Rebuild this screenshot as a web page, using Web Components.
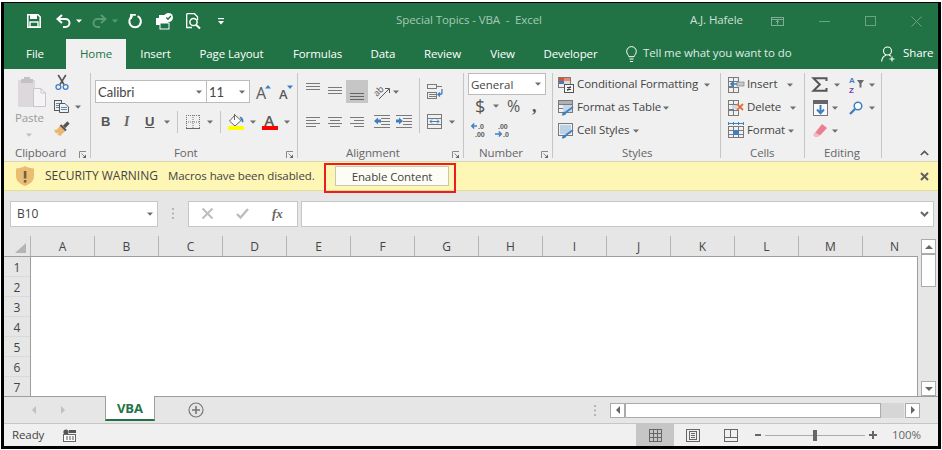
<!DOCTYPE html>
<html lang="en"><head><meta charset="utf-8"><title>Special Topics - VBA - Excel</title>
<style>html,body{margin:0;padding:0;background:#fff;overflow:hidden}</style></head>
<body>
<xl-app>
  <xl-titlebar></xl-titlebar>
  <xl-tabs></xl-tabs>
  <xl-ribbon>
    <xl-group w="87" label="Clipboard" lx="11" launcher>
      <xl-hbox>
        <xl-col w="50">
          <xl-ic name="paste" m="14" t="4"></xl-ic>
          <xl-t m="11" t="3" w="31" c="#9a9a9a" nb>Paste</xl-t>
          <xl-ic name="caretl" m="22" t="7"></xl-ic>
        </xl-col>
        <xl-col w="30">
          <xl-row h="17" t="1"><xl-ic name="cut" m="1"></xl-ic></xl-row>
          <xl-row h="17" t="7"><xl-ic name="copy"></xl-ic><xl-ic name="caret" m="6"></xl-ic></xl-row>
          <xl-row h="17" t="5"><xl-ic name="painter"></xl-ic></xl-row>
        </xl-col>
      </xl-hbox>
    </xl-group>
    <xl-group w="207" label="Font" lx="83" launcher>
      <xl-row h="23" t="7">
        <xl-combo m="4" w="112" h="23" f="Lato" text="Calibri"></xl-combo>
        <xl-combo m="-1" w="44" h="23" f="Lato" text="11"></xl-combo>
        <xl-ic name="grow" m="6"></xl-ic><xl-ic name="shrink" m="8"></xl-ic>
      </xl-row>
      <xl-row h="23" t="7">
        <xl-t m="10" w="8" s="13" wt="700" f="Liberation Sans" c="#555">B</xl-t>
        <xl-t m="15" w="6" s="14" wt="700" f="Liberation Serif" c="#666" it>I</xl-t>
        <xl-t m="15" w="8" s="13" wt="700" f="Liberation Sans" c="#555" u>U</xl-t>
        <xl-ic name="caret" m="11"></xl-ic><xl-sep m="7" h="22"></xl-sep>
        <xl-ic name="borders" m="8"></xl-ic><xl-ic name="caret" m="7"></xl-ic><xl-sep m="7" h="22"></xl-sep>
        <xl-ic name="fill" m="7"></xl-ic><xl-ic name="caret" m="6"></xl-ic>
        <xl-ic name="color" m="6"></xl-ic><xl-ic name="caret" m="6"></xl-ic>
      </xl-row>
    </xl-group>
    <xl-group w="166" label="Alignment" lx="48" launcher>
      <xl-hbox>
        <xl-col w="121">
          <xl-row h="23" t="7">
            <xl-ic name="atop" m="8"></xl-ic><xl-ic name="amid" m="8"></xl-ic><xl-ic name="abot" m="4"></xl-ic>
            <xl-ic name="orient" m="6"></xl-ic><xl-ic name="caret" m="3"></xl-ic>
          </xl-row>
          <xl-row h="23" t="7">
            <xl-ic name="left" m="8"></xl-ic><xl-ic name="center" m="8"></xl-ic><xl-ic name="right" m="8"></xl-ic>
            <xl-ic name="outdent" m="10"></xl-ic><xl-ic name="indent" m="6"></xl-ic>
          </xl-row>
        </xl-col>
        <xl-sep h="55" t="5"></xl-sep>
        <xl-col w="40">
          <xl-row h="23" t="7"><xl-ic name="wrap" m="7"></xl-ic></xl-row>
          <xl-row h="23" t="7"><xl-ic name="merge" m="7"></xl-ic><xl-ic name="caret" m="6"></xl-ic></xl-row>
        </xl-col>
      </xl-hbox>
    </xl-group>
    <xl-group w="89" label="Number" lx="15" launcher>
      <xl-row h="22"><xl-combo m="4" w="78" h="22" f="Open Sans" s="11.5" text="General"></xl-combo></xl-row>
      <xl-row h="23" t="-1">
        <xl-t m="11" w="9" s="18" f="Open Sans" c="#555" ls="0">$</xl-t><xl-ic name="caret" m="9"></xl-ic>
        <xl-t m="8" w="14" s="16" f="Open Sans" c="#555" ls="0">%</xl-t>
        <xl-t m="11" w="5" s="18" wt="700" f="Liberation Serif" c="#555" ls="0">,</xl-t>
      </xl-row>
      <xl-row h="23" t="1"><xl-ic name="incdec" m="7"></xl-ic><xl-ic name="decdec" m="7"></xl-ic></xl-row>
    </xl-group>
    <xl-group w="168" label="Styles" lx="69">
      <xl-row h="23"><xl-ic name="cond" m="5"></xl-ic><xl-t m="3" w="124">Conditional Formatting</xl-t><xl-ic name="caret" m="3"></xl-ic></xl-row>
      <xl-row h="23"><xl-ic name="table" m="5"></xl-ic><xl-t m="3" w="84">Format as Table</xl-t><xl-ic name="caret" m="2"></xl-ic></xl-row>
      <xl-row h="23"><xl-ic name="cstyle" m="5"></xl-ic><xl-t m="3" w="54">Cell Styles</xl-t><xl-ic name="caret" m="2"></xl-ic></xl-row>
    </xl-group>
    <xl-group w="84" label="Cells" lx="29">
      <xl-row h="23"><xl-ic name="cinsert" m="7"></xl-ic><xl-t m="3" w="29">Insert</xl-t><xl-ic name="caret" m="11"></xl-ic></xl-row>
      <xl-row h="23"><xl-ic name="cdelete" m="7"></xl-ic><xl-t m="3" w="33">Delete</xl-t><xl-ic name="caret" m="10"></xl-ic></xl-row>
      <xl-row h="23"><xl-ic name="cformat" m="7"></xl-ic><xl-t m="3" w="38">Format</xl-t><xl-ic name="caret" m="3"></xl-ic></xl-row>
    </xl-group>
    <xl-group w="77" label="Editing" lx="19">
      <xl-row h="23"><xl-ic name="sigma" m="7"></xl-ic><xl-ic name="caret" m="7"></xl-ic><xl-ic name="sort" m="9"></xl-ic><xl-ic name="caret" m="4"></xl-ic></xl-row>
      <xl-row h="23"><xl-ic name="filld" m="8"></xl-ic><xl-ic name="caret" m="4"></xl-ic><xl-ic name="find" m="11"></xl-ic><xl-ic name="caret" m="6"></xl-ic></xl-row>
      <xl-row h="23"><xl-ic name="eraser" m="8"></xl-ic><xl-ic name="caret" m="5"></xl-ic></xl-row>
    </xl-group>
    <xl-ic name="collapse" m="38" t="77"></xl-ic>
  </xl-ribbon>
  <xl-security></xl-security>
  <xl-formula></xl-formula>
  <xl-sheet></xl-sheet>
  <xl-sheetbar></xl-sheetbar>
  <xl-status></xl-status>
</xl-app>
<script>
const G='#6f6f6f',D='#5a5a5a',B='#3f7fc1',W='#fff',L='#7a7a7a';
const hl=(x1,x2,y,c=L)=>`<rect x="${x1}" y="${y}" width="${x2-x1}" height="1" fill="${c}"/>`;
const vl=(x,y1,y2,c=L)=>`<rect x="${x}" y="${y1}" width="1" height="${y2-y1}" fill="${c}"/>`;
const tbox=(x,y,w,h,c=L,f='none')=>`<rect x="${x+.5}" y="${y+.5}" width="${w-1}" height="${h-1}" stroke="${c}" fill="${f}"/>`;
const tx=(s,x,y,sz,c,extra='')=>`<text x="${x}" y="${y}" font-family="Open Sans" font-size="${sz}" fill="${c}" ${extra}>${s}</text>`;
const ts=(s,x,y,sz,c)=>`<text x="${x}" y="${y}" font-family="Liberation Sans" font-weight="700" font-size="${sz}" fill="${c}">${s}</text>`;
const ICONS={
 caret:[6,4,`<path d="M0 .5H6L3 3.8Z" fill="${G}"/>`],
 caretl:[6,4,`<path d="M0 .5H6L3 3.8Z" fill="#bdbdbd"/>`],
 save:[14,14,`<path d="M.8 .8H11L13.2 3V13.2H.8Z" fill="none" stroke="#fff" stroke-width="1.6"/><rect x="3" y="1" width="7" height="4" fill="#fff"/><rect x="3" y="8" width="8" height="5" fill="none" stroke="#fff" stroke-width="1.4"/>`],
 undo:[15,14,`<path d="M6 1L1.5 5L6 9M1.5 5H9.5a3.8 3.8 0 0 1 0 8H7" fill="none" stroke="#fff" stroke-width="2"/>`],
 redo:[15,14,`<path d="M9 1L13.5 5L9 9M13.5 5H5.5a3.8 3.8 0 0 0 0 8H8" fill="none" stroke="#5b9a78" stroke-width="2"/>`],
 wcaret:[6,4,`<path d="M0 .5H6L3 3.8Z" fill="#fff"/>`],
 dcaret:[6,4,`<path d="M0 .5H6L3 3.8Z" fill="#5b9a78"/>`],
 refresh:[14,14,`<path d="M4.6 2.2A5.8 5.8 0 1 0 9.6 2.2" fill="none" stroke="#fff" stroke-width="2"/><path d="M3 0V5M3 .9H7.8" stroke="#fff" stroke-width="1.8" fill="none"/>`],
 macro:[17,16,`<rect x="0" y="5" width="12" height="7" fill="#fff"/><rect x="3" y="2" width="7" height="4" fill="#fff"/><rect x="4" y="10" width="9" height="6" fill="#217346" stroke="#fff"/><circle cx="12.5" cy="4.5" r="4.5" fill="#fff"/><path d="M10.3 4.5L12 6.2L14.8 3" stroke="#217346" stroke-width="1.4" fill="none"/>`],
 preview:[15,16,`<path d="M.7 .7H8.5L11.5 3.7V7M.7 .7V14.5H6" fill="none" stroke="#fff" stroke-width="1.3"/><circle cx="7.5" cy="9" r="3.6" fill="none" stroke="#fff" stroke-width="1.5"/><path d="M10 11.8L14 15.5" stroke="#fff" stroke-width="2"/>`],
 qat:[6,7,`<rect y="0" width="6" height="1.2" fill="#fff"/><path d="M0 3H6L3 6.5Z" fill="#fff"/>`],
 rbn:[13,9,`<rect x=".5" y=".5" width="12" height="8" fill="none" stroke="#7fb096"/>${hl(1,12,2,'#7fb096')}<path d="M6.5 3.5V7.5M4.8 5L6.5 3.5L8.2 5" fill="none" stroke="#7fb096"/>`],
 min:[11,9,`<rect y="4" width="11" height="1" fill="#6ba386"/>`],
 max:[11,10,`<rect x=".5" y=".5" width="10" height="9" fill="none" stroke="#6ba386"/>`],
 close:[11,11,`<path d="M.5 .5L10.5 10.5M10.5 .5L.5 10.5" stroke="#6ba386" fill="none"/>`],
 bulb:[11,17,`<path d="M2.9 10.7C2.5 8.8 .7 7.9 .7 5.4A4.8 4.8 0 0 1 10.3 5.4C10.3 7.9 8.5 8.8 8.1 10.7Z" fill="none" stroke="#fff" stroke-width="1"/><path d="M3.5 13H7.5M4 15.5H7" stroke="#fff" stroke-width="1.2"/>`],
 person:[15,16,`<circle cx="6.5" cy="5" r="4" fill="none" stroke="#fff" stroke-width="1.1"/><path d="M.6 15.5C1 11.5 3 9.8 5 9.2M8 9.2C8.8 9.4 9.5 9.8 10 10.2" fill="none" stroke="#fff" stroke-width="1.1"/><path d="M11 10.5V15.5M8.5 13H13.5" stroke="#fff" stroke-width="1.1"/>`],
 paste:[28,30,`<rect x="0" y="3" width="17" height="27" fill="#dcd8dc"/><rect x="6" y="0" width="6" height="3" fill="#c4c0c4"/><rect x="3" y="2" width="12" height="4" fill="#c4c0c4"/><path d="M15.5 11.5H23L27.5 16V29.5H15.5Z" fill="#f6f3f7" stroke="#c9c6ca"/><path d="M23 11.5V16H27.5" fill="none" stroke="#c9c6ca"/>`],
 cut:[14,15,`<path d="M3.2 0L9 9.5M10.8 0L5 9.5" stroke="#555" stroke-width="1.6" fill="none"/><circle cx="3.4" cy="12" r="2.4" fill="none" stroke="${B}" stroke-width="1.3"/><circle cx="10.6" cy="12" r="2.4" fill="none" stroke="${B}" stroke-width="1.3"/>`],
 copy:[15,13,`${tbox(0,0,8,11,'#5a5a5a','#f0f0f0')}${hl(2,6,3,'#5a8ab8')}${hl(2,6,5,'#5a8ab8')}${hl(2,6,7,'#5a8ab8')}<path d="M5.5 3.5H11L14.5 7V12.5H5.5Z" fill="#f0f0f0" stroke="#5a5a5a"/>${hl(7,13,7,'#5a8ab8')}${hl(7,13,9,'#5a8ab8')}`],
 painter:[16,15,`<path d="M10 6L14.5 1.5" stroke="#555" stroke-width="3.2" fill="none"/><path d="M0 9L3 8.5L6.5 4L12 9.5L8 13L6.5 15L3 13.5L5 11.5L2 12.5Z" fill="#e8b86f"/><path d="M6.5 4L12 9.5" stroke="#555" stroke-width="2"/>`],
 launcher:[7,7,`<path d="M.5 7V.5H7" fill="none" stroke="#8a8a8a"/><path d="M2.5 2.5L6 6" stroke="#8a8a8a"/><path d="M7 3.5V7H3.5Z" fill="#666"/>`],
 grow:[15,14,`${tx('A',0,14,16,D)}<path d="M9 3.5L12 0L15 3.5Z" fill="${B}"/>`],
 shrink:[14,14,`${tx('A',0,14,13,D,'font-weight="600"')}<path d="M8 .5H14L11 4Z" fill="${B}"/>`],
 borders:[14,14,`<path d="M.5 0V13M7 0V13M13.5 0V13M0 .5H14M0 7H14" stroke="#777" stroke-dasharray="1 1" fill="none"/><rect y="13" width="14" height="1" fill="#666"/>`],
 fill:[16,16,`<path d="M7 1L13 6.5L7 12L1.5 7Z" fill="#fafafa" stroke="#666"/><path d="M6.5 0V6" stroke="#666"/><path d="M11.5 2.5C14 2.8 15.5 4.5 15.5 7.5C15 9 14 8.5 13.5 7Z" fill="${B}"/><rect y="12" width="16" height="4" fill="#ffff00"/>`],
 color:[16,16,`${tx('A',2.3,12,15,D,'font-weight="600"')}<rect y="12" width="16" height="4" fill="#ff0000"/>`],
 atop:[14,23,`${hl(0,14,3)}${hl(0,14,6)}${hl(0,14,9)}`],
 amid:[14,23,`${hl(0,14,7)}${hl(0,14,10)}${hl(0,14,13)}`],
 abot:[22,23,`<rect width="22" height="23" fill="#c6c6c6"/>${hl(4,18,13,'#666')}${hl(4,18,16,'#666')}${hl(4,18,19,'#666')}`],
 orient:[16,16,`<text x="0" y="10" font-family="Open Sans" font-size="9" fill="${D}" transform="rotate(-45 5 8)">ab</text><path d="M5 15L15 5M11 4.5H15.5V9" stroke="${D}" fill="none"/>`],
 left:[14,10,`${hl(0,14,0)}${hl(0,10,3)}${hl(0,14,6)}${hl(0,10,9)}`],
 center:[14,10,`${hl(0,14,0)}${hl(2,12,3)}${hl(0,14,6)}${hl(2,12,9)}`],
 right:[14,10,`${hl(0,14,0)}${hl(4,14,3)}${hl(0,14,6)}${hl(4,14,9)}`],
 outdent:[16,13,`${hl(0,16,0)}${hl(7,16,3)}${hl(7,16,6)}${hl(7,16,9)}${hl(0,16,12)}<path d="M0 6L4 2.5V4.5H7V7.5H4V9.5Z" fill="${B}"/>`],
 indent:[16,13,`${hl(0,16,0)}${hl(7,16,3)}${hl(7,16,6)}${hl(7,16,9)}${hl(0,16,12)}<path d="M7 6L3 2.5V4.5H0V7.5H3V9.5Z" fill="${B}"/>`],
 wrap:[16,16,`${tbox(0,0,10,5)}${hl(10,15,2)}${tbox(0,8,10,7)}${hl(2,9,10)}${hl(2,9,12)}<path d="M15 5V8.5C15 10 14 10.5 12.5 10.5H11M13 8.5L11 10.5L13 12.5" fill="none" stroke="${B}" stroke-width="1.3"/>`],
 merge:[16,15,`${tbox(0,0,15,15)}${hl(1,14,4)}${hl(1,14,10)}<path d="M3 7.5H12M5 5.5L3 7.5L5 9.5M10 5.5L12 7.5L10 9.5" fill="none" stroke="${B}"/>`],
 incdec:[16,16,`${ts('.0',7,6.5,7,D)}${ts('.00',4,15,7,D)}<path d="M1 4H6M3.2 1.5L.7 4L3.2 6.5" fill="none" stroke="${B}" stroke-width="1.4"/>`],
 decdec:[16,16,`${ts('.00',4,6.5,7,D)}${ts('.0',9,15,7,D)}<path d="M1 12H7M4.8 9.5L7.3 12L4.8 14.5" fill="none" stroke="${B}" stroke-width="1.4"/>`],
 cond:[16,16,`${tbox(0,0,13,11)}<rect x="1" y="1" width="5" height="3" fill="#d8562b"/><rect x="6" y="1" width="6" height="3" fill="#e98a6a"/><rect x="1" y="4" width="5" height="3" fill="${B}"/><rect x="6" y="4" width="6" height="3" fill="#dcdcdc"/>${tbox(6,7,10,9,'#555','#f6f6f6')}${hl(9,13,10,'#444')}${hl(9,13,12,'#444')}<path d="M12.5 9L9.5 14" stroke="#444"/>`],
 table:[16,16,`${tbox(0,0,15,13)}${hl(1,14,4)}${hl(1,14,8)}${vl(5,1,12)}${vl(10,1,12)}<rect x="1" y="1" width="13" height="3" fill="#b0b0b0"/><rect x="5" y="5" width="9" height="7" fill="#c3d6ea"/><path d="M15 7L8 12" stroke="${B}" stroke-width="1.6"/><path d="M4 15C4 12.5 6 11.5 8 11.5C9 13 8 15.5 4 15.5Z" fill="${B}"/>`],
 cstyle:[16,16,`${tbox(0,0,15,13)}<rect x="2" y="2" width="11" height="9" fill="#bcd1e6"/><path d="M15 7L8 12" stroke="${B}" stroke-width="1.6"/><path d="M4 15C4 12.5 6 11.5 8 11.5C9 13 8 15.5 4 15.5Z" fill="${B}"/>`],
 cinsert:[16,16,`${tbox(0,0,6,5)}${tbox(5,0,6,5)}${tbox(0,4,6,6)}${tbox(0,10,6,6)}${tbox(5,10,6,6)}<rect x="9" y="5" width="7" height="4" fill="#c8c8c8" stroke="#777" stroke-width=".6"/><path d="M9 7H3M5.5 4.5L3 7L5.5 9.5" fill="none" stroke="${B}" stroke-width="1.6"/>`],
 cdelete:[16,16,`${tbox(0,0,6,5)}${tbox(5,0,6,5)}${tbox(0,4,6,6)}${tbox(0,10,6,6)}${tbox(5,10,6,6)}<rect x="4" y="5" width="5" height="4" fill="#c9d9ea"/><path d="M9 4L15 10M15 4L9 10" stroke="#e0703c" stroke-width="1.8"/>`],
 cformat:[16,17,`${hl(0,16,1,B)}${vl(0,0,3,B)}${vl(5,0,3,B)}${vl(10,0,3,B)}${vl(15,0,3,B)}${tbox(0,4,16,12)}${hl(1,15,8)}${hl(1,15,12)}${vl(5,5,15)}${vl(10,5,15)}<rect x="5" y="8" width="6" height="5" fill="${B}"/>`],
 sigma:[15,15,`<path d="M14.5 4V1.2H1.5L7.8 7.5L1.5 13.8H14.5V11" fill="none" stroke="#555" stroke-width="2"/>`],
 sort:[16,17,`${ts('A',0,7,8,B)}${ts('Z',0,16.5,8,'#7a3fa8')}<path d="M8 4H15L12.5 7.5V11.5H10.5V7.5Z" fill="#6a6a6a"/>`],
 filld:[15,16,`<rect x=".5" y=".5" width="14" height="15" fill="#fafafa" stroke="#777"/><rect width="15" height="4" fill="#666"/><path d="M7.5 5V13M4 9.5L7.5 13.2L11 9.5" fill="none" stroke="${B}" stroke-width="2"/>`],
 find:[14,14,`<circle cx="9" cy="5" r="3.8" fill="#fff" stroke="${B}" stroke-width="1.5"/><path d="M6 8L1 13" stroke="${B}" stroke-width="2.4"/>`],
 eraser:[14,13,`<path d="M9 0L14 4L7 11.5L2 9Z" fill="#e97f90"/><path d="M2 8L6.5 11.5L5 13H2L0 11Z" fill="#f3b9c2"/>`],
 collapse:[9,6,`<path d="M.8 5L4.5 1.4L8.2 5" fill="none" stroke="#555" stroke-width="1.7"/>`],
 shield:[18,20,`<path d="M9 0C12 1.8 15 2.4 18 2.4V10C18 15 14 18 9 20C4 18 0 15 0 10V2.4C3 2.4 6 1.8 9 0Z" fill="#e9bd72"/><rect x="7.8" y="5" width="2.6" height="7.5" fill="#6f6345"/><rect x="7.8" y="14" width="2.6" height="2.6" fill="#6f6345"/>`],
 xclose:[9,9,`<path d="M1 1L8 8M8 1L1 8" stroke="#5f5f5f" stroke-width="2"/>`],
 chev:[9,6,`<path d="M1 1L4.5 4.5L8 1" fill="none" stroke="#666" stroke-width="2"/>`],
 cross:[11,11,`<path d="M.5 .5L10.5 10.5M10.5 .5L.5 10.5" stroke="#bdbdbd" stroke-width="2"/>`],
 check:[13,11,`<path d="M1 6L4.5 9.5L12 1" fill="none" stroke="#bdbdbd" stroke-width="2.4"/>`],
 fx:[12,12,`<text x="0" y="10" font-family="Liberation Serif" font-style="italic" font-weight="700" font-size="13" fill="#666">fx</text>`],
 dots:[2,11,`<rect width="2" height="2" fill="#b5b5b5"/><rect y="4.5" width="2" height="2" fill="#b5b5b5"/><rect y="9" width="2" height="2" fill="#b5b5b5"/>`],
 dcorner:[11,10,`<path d="M11 0V10H0Z" fill="#b4b4b4"/>`],
 up:[8,4,`<path d="M0 4H8L4 0Z" fill="#666"/>`],
 down:[8,4,`<path d="M0 0H8L4 4Z" fill="#666"/>`],
 lft:[4,8,`<path d="M4 0V8L0 4Z" fill="#666"/>`],
 rgt:[4,8,`<path d="M0 0V8L4 4Z" fill="#666"/>`],
 lftd:[4,8,`<path d="M4 0V8L0 4Z" fill="#c0c0c0"/>`],
 rgtd:[4,8,`<path d="M0 0V8L4 4Z" fill="#c0c0c0"/>`],
 plusc:[16,16,`<circle cx="8" cy="8" r="7" fill="none" stroke="#777" stroke-width="1.2"/><path d="M8 4V12M4 8H12" stroke="#777" stroke-width="1.6"/>`],
 mrec:[13,13,`<circle cx="3" cy="3" r="2.6" fill="#555"/><rect x="6" y="1" width="7" height="3" fill="#555"/><rect x=".5" y="5.5" width="12" height="7" fill="#fff" stroke="#666"/><path d="M3 8H5M6 8H8M9 8H11M3 10H5M6 10H8M9 10H11" stroke="#555"/>`],
 vnorm:[13,13,`${tbox(0,0,13,13,'#666')}${hl(1,12,4,'#666')}${hl(1,12,8,'#666')}${vl(4,1,12,'#666')}${vl(8,1,12,'#666')}`],
 vpage:[14,13,`${tbox(0,0,14,13,'#666')}${tbox(3,2,8,9,'#666')}${hl(5,9,4,'#666')}${hl(5,9,6,'#666')}${hl(5,9,8,'#666')}`],
 vbreak:[14,13,`${tbox(0,0,14,13,'#666')}<rect x="1" y="8" width="12" height="1" fill="#666"/>${vl(6,1,8,'#666')}`],
 zminus:[6,2,`<rect width="6" height="2" fill="#666"/>`],
 zplus:[8,8,`<rect y="3" width="8" height="2" fill="#666"/><rect x="3" width="2" height="8" fill="#666"/>`],
 zslide:[100,11,`<rect y="5" width="100" height="1" fill="#aaa"/><rect x="48" width="4" height="11" fill="#666"/>`]
};
const UI='"Open Sans","Noto Sans",sans-serif';
class XBase extends HTMLElement{
  connectedCallback(){
    const a=n=>this.getAttribute(n),s=this.style;
    if(a('m')!==null)s.marginLeft=a('m')+'px';
    if(a('t')!==null)s.marginTop=a('t')+'px';
    if(a('w')!==null)s.width=a('w')+'px';
    if(a('h')!==null)s.height=a('h')+'px';
    if(this.ready)this.ready();
  }
  sh(html){if(!this.shadowRoot)this.attachShadow({mode:'open'});this.shadowRoot.innerHTML=html;}
}
class XlIc extends XBase{ready(){
  const [w,h,m]=ICONS[this.getAttribute('name')];
  this.sh(`<style>:host{display:block;flex:none;line-height:0}svg{display:block;overflow:visible}</style><svg xmlns="http://www.w3.org/2000/svg" width="${w}" height="${h}" viewBox="0 0 ${w} ${h}">${m}</svg>`);
}}
class XlT extends XBase{ready(){
  const a=n=>this.getAttribute(n),lift=!a('s')&&!this.hasAttribute('nb');
  this.sh(`<style>:host{display:block;flex:none;white-space:pre;line-height:16px;${lift?'padding-bottom:2px;':''}font-family:${a('f')?'"'+a('f')+'",':''}${UI};font-size:${a('s')||11.5}px;color:${a('c')||'#444'};font-weight:${a('wt')||400};${this.hasAttribute('it')?'font-style:italic;':''}${this.hasAttribute('u')?'text-decoration:underline;':''}letter-spacing:${a('ls')!==null?a('ls'):(a('s')?0:-0.1)}px}</style><slot></slot>`);
}}
class XlSep extends XBase{ready(){this.sh(`<style>:host{display:block;flex:none;width:1px;background:#c6c6c6}</style>`);}}
class XlRow extends XBase{ready(){this.sh(`<style>:host{display:flex;align-items:center;flex:none}</style><slot></slot>`);}}
class XlCol extends XBase{ready(){this.sh(`<style>:host{display:flex;flex-direction:column;align-items:flex-start;flex:none}</style><slot></slot>`);}}
class XlHbox extends XBase{ready(){this.sh(`<style>:host{display:flex;align-items:flex-start;flex:none}</style><slot></slot>`);}}
class XlCombo extends XBase{ready(){
  const a=n=>this.getAttribute(n);
  this.sh(`<style>:host{display:flex;align-items:center;flex:none;box-sizing:border-box;background:#fff;border:1px solid #bcbcbc;font:${a('s')||13}px "${a('f')||'Open Sans'}",sans-serif;color:#444;padding:0 4px 0 2px}
  span{flex:1;white-space:pre}</style><span>${a('text')}</span><xl-ic name="caret"></xl-ic>`);
}}
class XlGroup extends XBase{ready(){
  const a=n=>this.getAttribute(n);
  this.sh(`<style>:host{display:flex;flex-direction:column;flex:none;box-sizing:border-box;height:85px;border-right:1px solid #c6c6c6}
  main{flex:1;min-height:0}
  footer{display:flex;align-items:center;height:14px;margin-bottom:-3px}
  xl-ic{margin-left:auto;margin-right:4px}</style>
  <main><slot></slot></main><footer><xl-t m="${a('lx')}" c="#666">${a('label')}</xl-t>${this.hasAttribute('launcher')?'<xl-ic name="launcher"></xl-ic>':''}</footer>`);
}}
class XlRibbon extends XBase{ready(){this.sh(`<style>:host{display:flex;align-items:flex-start;box-sizing:border-box;height:92px;padding-top:4px;background:#f0f0f0}</style><slot></slot>`);}}
class XlApp extends XBase{ready(){this.sh(`<style>:host{display:flex;flex-direction:column;box-sizing:content-box;width:934px;height:443px;margin:2px 0 0 1px;border:solid #000;border-width:1px 3px 3px;overflow:hidden;font-family:${UI};background:#fff}</style><slot></slot>`);}}
class XlTitlebar extends XBase{ready(){this.sh(`<style>:host{display:flex;align-items:center;height:36px;background:#217346;flex:none}</style>
  <xl-ic name="save" m="23"></xl-ic><xl-ic name="undo" m="15"></xl-ic><xl-ic name="wcaret" m="5"></xl-ic>
  <xl-ic name="redo" m="10"></xl-ic><xl-ic name="dcaret" m="5"></xl-ic><xl-ic name="refresh" m="10"></xl-ic>
  <xl-ic name="macro" m="14"></xl-ic><xl-ic name="preview" m="13"></xl-ic><xl-ic name="qat" m="17"></xl-ic>
  <xl-t m="172" w="150" c="#a6c9b5">Special Topics - VBA  -  Excel</xl-t>
  <xl-t m="144" w="55" c="#cfe0d6">A.J. Hafele</xl-t>
  <xl-ic name="rbn" m="26"></xl-ic><xl-ic name="min" m="35"></xl-ic><xl-ic name="max" m="35"></xl-ic><xl-ic name="close" m="35"></xl-ic>`);}}
class XlTab extends XBase{ready(){
  const act=this.hasAttribute('active');
  this.sh(`<style>:host{display:flex;align-items:center;justify-content:center;flex:none;height:30px;box-sizing:border-box;padding-bottom:1px;white-space:pre;letter-spacing:-.1px;font:11.5px ${UI};${act?'background:#f0f0f0;color:#217346':'color:#fff'}}</style><slot></slot>`);
}}
class XlTabs extends XBase{ready(){this.sh(`<style>:host{display:flex;align-items:center;height:30px;background:#217346;flex:none}</style>
  <xl-tab w="62">File</xl-tab><xl-tab w="60" active>Home</xl-tab><xl-tab w="59">Insert</xl-tab><xl-tab w="93">Page Layout</xl-tab><xl-tab w="79">Formulas</xl-tab><xl-tab w="52">Data</xl-tab><xl-tab w="67">Review</xl-tab><xl-tab w="53">View</xl-tab><xl-tab w="83">Developer</xl-tab>
  <xl-ic name="bulb" m="14"></xl-ic><xl-t m="6" w="151" c="#dfeae4">Tell me what you want to do</xl-t>
  <xl-ic name="person" m="87"></xl-ic><xl-t m="7" w="29" c="#fff">Share</xl-t>`);}}
class XlSecurity extends XBase{ready(){this.sh(`<style>:host{display:flex;align-items:center;position:relative;box-sizing:border-box;height:30px;flex:none;background:#fdf6b5;border-top:1px solid #d6d6b4;border-bottom:1px solid #e5e090}
  button{box-sizing:border-box;width:114px;height:20px;margin:0 0 0 21px;padding:0;background:#fdfdf5;border:1px solid #c8c8b0;font:11.5px ${UI};letter-spacing:-.1px;color:#444}
  .mark{position:absolute;left:320px;top:1px;width:132px;height:30px;box-sizing:border-box;border:2px solid #ec1c24;pointer-events:none}</style>
  <xl-ic name="shield" m="12"></xl-ic><xl-t m="11" w="113" s="12">SECURITY WARNING</xl-t><xl-t m="10" w="146" nb>Macros have been disabled.</xl-t>
  <button>Enable Content</button><xl-ic name="xclose" m="471"></xl-ic><div class="mark"></div>`);}}
class XlFormula extends XBase{ready(){this.sh(`<style>:host{display:flex;align-items:center;box-sizing:border-box;height:45px;flex:none;padding:0 0 0 6px;background:#e6e6e6}
  .name,.btns,.input{display:flex;align-items:center;box-sizing:border-box;height:26px;background:#fff;border:1px solid #c6c6c6;flex:none}
  .name{width:148px;padding:0 4px 0 6px;font:12px ${UI};color:#444;justify-content:space-between}
  .btns{width:110px;margin-left:14px}
  .input{width:633px;margin-left:3px;justify-content:flex-end;padding-right:4px}</style>
  <div class="name"><span>B10</span><xl-ic name="caret"></xl-ic></div><xl-ic name="dots" m="14"></xl-ic>
  <div class="btns"><xl-ic name="cross" m="13"></xl-ic><xl-ic name="check" m="23"></xl-ic><xl-ic name="fx" m="23"></xl-ic></div>
  <div class="input"><xl-ic name="chev"></xl-ic></div>`);}}
class XlColHead extends XBase{ready(){this.sh(`<style>:host{display:flex;align-items:center;justify-content:center;flex:none;box-sizing:border-box;width:64px;height:20px;border-right:1px solid #b4b4b4;font:12px ${UI};color:#444}</style><slot></slot>`);}}
class XlRowHead extends XBase{ready(){this.sh(`<style>:host{display:flex;align-items:center;justify-content:center;flex:none;box-sizing:border-box;height:20px;padding-top:1px;border-bottom:1px solid #dadada;font:12px ${UI};color:#444}</style><slot></slot>`);}}
class XlSheet extends XBase{ready(){
  const cols=[...'ABCDEFGHIJKLMN'].map(c=>`<xl-col-head>${c}</xl-col-head>`).join('');
  const rows=[1,2,3,4,5,6,7].map(r=>`<xl-row-head>${r}</xl-row-head>`).join('');
  this.sh(`<style>:host{display:grid;grid-template-columns:914px 20px;grid-template-rows:21px 139px;height:160px;flex:none;background:#e6e6e6}
  .corner{grid-column:1;grid-row:1;display:grid;grid-template-columns:27px 1fr;overflow:hidden;border-bottom:1px solid #9e9e9e}
  .tri{display:flex;align-items:flex-end;justify-content:flex-end;padding:0 4px 3px 0;box-sizing:border-box;height:20px;border-right:1px solid #b4b4b4}
  .cols{display:flex;overflow:hidden}
  .body{grid-column:1;grid-row:2;display:grid;grid-template-columns:27px 1fr;overflow:hidden}
  .rows{border-right:1px solid #9e9e9e;box-sizing:border-box}
  .cells{background:#fff;border-right:1px solid #9e9e9e}
  .sb{grid-column:2;grid-row:1/3;display:flex;flex-direction:column;padding:3px 0 0 3px}
  .btn{display:flex;align-items:center;justify-content:center;box-sizing:border-box;width:15px;height:15px;background:#fff;border:1px solid #ababab;flex:none}
  .thumb{box-sizing:border-box;width:15px;height:33px;background:#fff;border:1px solid #ababab;flex:none}
  .sp{flex:1}</style>
  <div class="corner"><div class="tri"><xl-ic name="dcorner"></xl-ic></div><div class="cols">${cols}</div></div>
  <div class="body"><div class="rows">${rows}</div><div class="cells"></div></div>
  <div class="sb"><div class="btn"><xl-ic name="up"></xl-ic></div><div class="thumb"></div><div class="sp"></div><div class="btn"><xl-ic name="down"></xl-ic></div></div>`);}}
class XlSheetbar extends XBase{ready(){this.sh(`<style>:host{display:flex;align-items:center;box-sizing:border-box;height:28px;flex:none;background:#e6e6e6;border-top:1px solid #9e9e9e;border-bottom:1px solid #c6c6c6}
  .tab{display:flex;align-items:center;justify-content:center;box-sizing:border-box;align-self:flex-start;width:50px;height:25px;margin:-1px 0 0 40px;background:#fff;border:solid #9e9e9e;border-width:0 1px;border-bottom:2px solid #217346;font:700 13px ${UI};color:#217346;flex:none}
  .hs{display:flex;align-items:center;margin-left:14px;height:15px;flex:none}
  .btn{display:flex;align-items:center;justify-content:center;box-sizing:border-box;width:15px;height:15px;background:#fff;border:1px solid #ababab;flex:none}
  .thumb{box-sizing:border-box;width:256px;height:15px;background:#fff;border:1px solid #ababab}
  .track{width:23px;height:15px;background:#d6d6d6;margin-right:1px}</style>
  <xl-ic name="lftd" m="28"></xl-ic><xl-ic name="rgtd" m="25"></xl-ic>
  <div class="tab">VBA</div><xl-ic name="plusc" m="33"></xl-ic>
  <xl-ic name="dots" m="390"></xl-ic>
  <div class="hs"><div class="btn"><xl-ic name="lft"></xl-ic></div><div class="thumb"></div><div class="track"></div><div class="btn"><xl-ic name="rgt"></xl-ic></div></div>`);}}
class XlStatus extends XBase{ready(){this.sh(`<style>:host{display:flex;align-items:center;box-sizing:border-box;height:22px;flex:none;background:#f0f0f0;font:12px ${UI};color:#444}
  .v{display:flex;align-items:center;justify-content:center;align-self:stretch;width:38px;background:#c6c6c6;margin-left:560px;flex:none}</style>
  <xl-t m="8" w="31" nb>Ready</xl-t><xl-ic name="mrec" m="20"></xl-ic>
  <div class="v"><xl-ic name="vnorm"></xl-ic></div>
  <xl-ic name="vpage" m="12"></xl-ic><xl-ic name="vbreak" m="24"></xl-ic>
  <xl-ic name="zminus" m="17"></xl-ic><xl-ic name="zslide" m="4"></xl-ic><xl-ic name="zplus" m="4"></xl-ic>
  <xl-t m="15" w="27" c="#666" nb>100%</xl-t>`);}}
Object.entries({'xl-ic':XlIc,'xl-t':XlT,'xl-sep':XlSep,'xl-row':XlRow,'xl-col':XlCol,'xl-hbox':XlHbox,'xl-combo':XlCombo,'xl-group':XlGroup,'xl-ribbon':XlRibbon,'xl-app':XlApp,'xl-titlebar':XlTitlebar,'xl-tab':XlTab,'xl-tabs':XlTabs,'xl-security':XlSecurity,'xl-formula':XlFormula,'xl-col-head':XlColHead,'xl-row-head':XlRowHead,'xl-sheet':XlSheet,'xl-sheetbar':XlSheetbar,'xl-status':XlStatus}).forEach(([n,c])=>customElements.define(n,c));
</script>
</body></html>
